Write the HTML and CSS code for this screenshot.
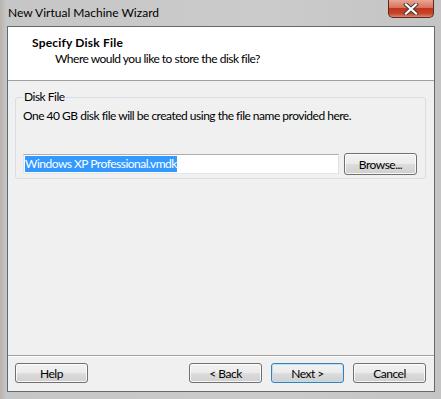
FILE: index.html
```html
<!DOCTYPE html>
<html>
<head>
<meta charset="utf-8">
<link rel="stylesheet" href="styles.css">
</head>
<body>
<div class="window">
  <div class="titlebar">
    <span class="title">New Virtual Machine Wizard</span>
    <div class="close">
      <svg width="16" height="12" viewBox="0 0 16 12"><path d="M3 1.5 L13 10.5 M13 1.5 L3 10.5" stroke="#3b3b3b" stroke-width="4" stroke-linecap="square"/><path d="M3 1.5 L13 10.5 M13 1.5 L3 10.5" stroke="#ffffff" stroke-width="2.2" stroke-linecap="square"/></svg>
    </div>
  </div>
  <div class="client">
    <div class="header">
      <div class="h-title">Specify Disk File</div>
      <div class="h-sub">Where would you like to store the disk file?</div>
    </div>
    <div class="body">
      <fieldset class="group">
        <legend>Disk File</legend>
        <p class="desc">One 40 GB disk file will be created using the file name provided here.</p>
        <div class="file-row">
          <div class="textbox"><span class="sel">Windows XP Professional.vmdk</span></div>
          <button class="btn browse">Browse...</button>
        </div>
      </fieldset>
    </div>
    <div class="footer">
      <button class="btn">Help</button>
      <div class="spacer"></div>
      <button class="btn">&lt; Back</button>
      <button class="btn default">Next &gt;</button>
      <button class="btn">Cancel</button>
    </div>
  </div>
</div>
</body>
</html>
```

FILE: styles.css
```css
* { box-sizing: border-box; }
html, body { margin: 0; padding: 0; }
body {
  width: 441px;
  height: 399px;
  overflow: hidden;
  font-family: Lato, "Noto Sans", sans-serif;
  font-size: 12px;
  letter-spacing: -0.5px;
  color: #000;
  background: linear-gradient(90deg, #b9b2ac 0px, #c6c6c6 6px, #cbcbcb 60%, #c4c4c4 100%);
}
.window {
  width: 441px;
  height: 399px;
  display: flex;
  flex-direction: column;
  padding: 0 6px 7px 7px;
}
.titlebar {
  height: 26px;
  display: flex;
  align-items: flex-start;
}
.title {
  margin-top: 5px;
  margin-left: 1px;
  font-size: 12px;
  line-height: 15px;
  letter-spacing: 0;
  color: #000;
}
.close {
  margin-left: auto;
  margin-right: 1px;
  width: 46px;
  height: 18px;
  border: 1px solid #5c2a1f;
  border-top: none;
  border-radius: 0 0 5px 5px;
  background: linear-gradient(#e9a694 0%, #d8715a 45%, #c0341d 50%, #c8442a 80%, #d98a6f 100%);
  display: flex;
  align-items: center;
  justify-content: center;
}
.client {
  flex: 1;
  display: flex;
  flex-direction: column;
  border: 1px solid #5f6a72;
  background: #f0f0f0;
}
.header {
  background: #fff;
  height: 54px;
  border-bottom: 1px solid #a0a0a0;
  padding: 8px 0 0 24px;
}
.h-title {
  font-weight: bold;
  letter-spacing: 0.2px;
  line-height: 16px;
}
.h-sub {
  margin-left: 23px;
  line-height: 16px;
}
.body {
  flex: 1;
  padding: 9px 8px 0 7px;
}
.group {
  margin: 0;
  border: 1px solid #d5dfe5;
  border-radius: 3px;
  padding: 0 8px 0 7px;
  height: 89px;
}
.group legend {
  padding: 0 1px;
  margin-left: 0;
  line-height: 14px;
}
.desc {
  margin: 4px 0 0 0;
  line-height: 16px;
}
.file-row {
  display: flex;
  align-items: center;
  margin-top: 29px;
}
.textbox {
  width: 316px;
  height: 20px;
  border: 1px solid #abadb3;
  border-color: #abadb3 #dbdfe6 #e3e9ef #e2e3ea;
  background: #fff;
  padding: 1px 0 0 1px;
  line-height: 16px;
}
.sel {
  background: #3399ff;
  color: #fff;
  display: inline-block;
  height: 16px;
}
.btn {
  font-family: inherit;
  font-size: 12px;
  letter-spacing: -0.5px;
  color: #000;
  width: 73px;
  height: 22px;
  border: 1px solid #707070;
  border-radius: 3px;
  background: linear-gradient(#f2f2f2 0%, #ebebeb 50%, #dddddd 51%, #cfcfcf 100%);
  box-shadow: inset 0 0 0 1px rgba(255,255,255,0.8);
  padding: 0;
}
.browse {
  margin-left: auto;
}
.footer {
  height: 36px;
  border-top: 1px solid #a0a0a0;
  box-shadow: inset 0 1px 0 #fff;
  display: flex;
  align-items: flex-start;
  padding: 7px 8px 0 7px;
  gap: 9px;
}
.footer .btn { height: 20px; }
.spacer { flex: 1; }
.btn.default {
  border-color: #3c7fb1;
  box-shadow: inset 0 0 0 1px #b6e2f7;
}
```
